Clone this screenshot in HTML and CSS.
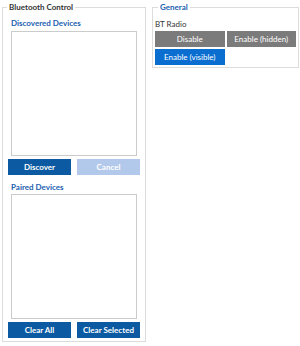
FILE: index.html
```html
<!DOCTYPE html>
<html lang="en">
<head>
    <meta charset="UTF-8">
    <title>Bluetooth</title>
    <link rel="stylesheet" href="styles.css">
</head>
<body>
    <div class="page">
        <fieldset class="group group-bt">
            <legend class="group-title">Bluetooth Control</legend>
            <h3 class="list-title">Discovered Devices</h3>
            <div class="list-box"></div>
            <div class="btn-row">
                <button class="btn btn-dark">Discover</button>
                <button class="btn btn-off">Cancel</button>
            </div>
            <h3 class="list-title list-title-second">Paired Devices</h3>
            <div class="list-box list-box-second"></div>
            <div class="btn-row">
                <button class="btn btn-dark">Clear All</button>
                <button class="btn btn-dark">Clear Selected</button>
            </div>
        </fieldset>
        <fieldset class="group group-general">
            <legend class="group-title group-title-blue">General</legend>
            <p class="radio-label">BT Radio</p>
            <div class="radio-grid">
                <button class="rbtn rbtn-grey">Disable</button>
                <button class="rbtn rbtn-grey">Enable (hidden)</button>
                <button class="rbtn rbtn-blue">Enable (visible)</button>
            </div>
        </fieldset>
    </div>
</body>
</html>
```

FILE: styles.css
```css
* {
    margin: 0;
    padding: 0;
    box-sizing: border-box;
}
body {
    background-color: #fff;
    font-family: Lato, "Liberation Sans", sans-serif;
    font-size: 8px;
    color: #333;
}
.page {
    display: flex;
    align-items: flex-start;
    padding-left: 2px;
    padding-top: 1px;
}
.group {
    border: 1px solid #dcdcdc;
    min-width: 0;
}
.group-bt {
    width: 144px;
    height: 341px;
    padding: 0 5px 3px;
}
.group-general {
    width: 147px;
    margin-left: 6px;
    padding: 0 2px 2px;
}
.group-title {
    padding: 0 2px;
    margin-left: -1px;
    line-height: 12px;
    font-weight: bold;
    color: #333;
}
.group-title-blue {
    margin-left: 3px;
    color: #1d5fb0;
}
.list-title {
    margin: 4px 3px 0;
    line-height: 12px;
    font-size: 8px;
    font-weight: bold;
    color: #1d5fb0;
}
.list-title-second {
    margin-top: 6px;
}
.list-box {
    margin: 2px 3px 0;
    height: 125px;
    border: 1px solid #cbcbcb;
}
.list-box-second {
    margin-top: 1px;
}
.btn-row {
    display: flex;
    gap: 6px;
    margin-top: 3px;
}
.btn {
    flex: 1;
    height: 16px;
    border: none;
    font-family: inherit;
    font-size: 8px;
    font-weight: bold;
    color: #fff;
}
.btn-dark {
    background-color: #0b5aa2;
}
.btn-off {
    background-color: #b3c9eb;
}
.radio-label {
    margin-top: 5px;
    line-height: 12px;
}
.radio-grid {
    display: grid;
    grid-template-columns: 1fr 1fr;
    gap: 2px;
    margin-top: 1px;
}
.rbtn {
    height: 16px;
    border: none;
    font-family: inherit;
    font-size: 8px;
    color: #fff;
}
.rbtn-grey {
    background-color: #7b7b7b;
}
.rbtn-blue {
    background-color: #0a6ed1;
}
```
